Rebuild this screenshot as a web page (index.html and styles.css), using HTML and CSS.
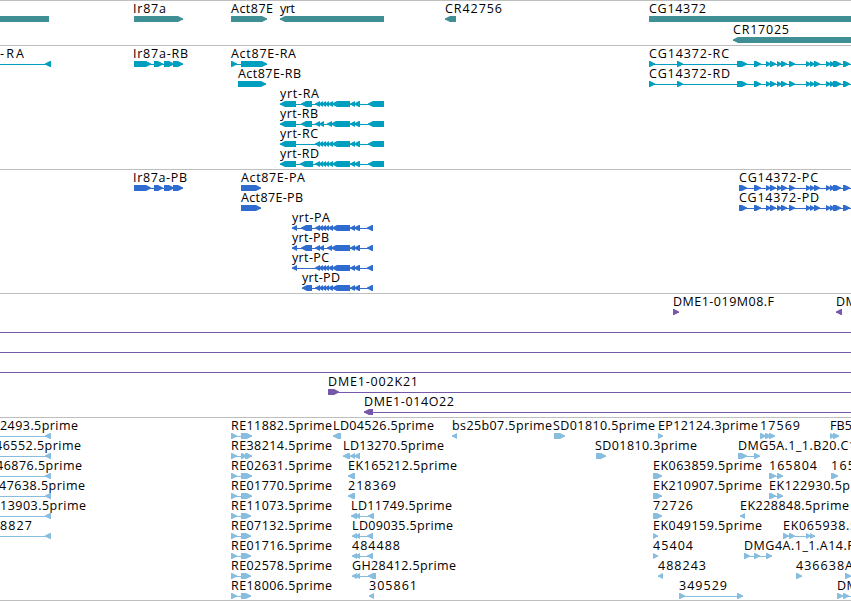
FILE: index.html
```
<!DOCTYPE html>
<html lang="en">
<head>
    <meta charset="UTF-8">
    <title>Genome Browser</title>
    <link rel="stylesheet" href="styles.css">
</head>
<body>
    <div class="browser">
        <svg class="track genes" id="genes"></svg>
        <svg class="track transcripts" id="transcripts"></svg>
        <svg class="track proteins" id="proteins"></svg>
        <svg class="track clones" id="clones"></svg>
        <svg class="track ests" id="ests"></svg>
    </div>
    <script src="tracks.js"></script>
</body>
</html>
```
FILE: styles.css
```
body {
    margin: 0;
    background-color: #fff;
    overflow: hidden;
}
.browser {
    display: flex;
    flex-direction: column;
    width: 851px;
    border-bottom: 1px solid #bebebe;
}
.track {
    display: block;
    width: 100%;
    height: 124px;
    box-sizing: border-box;
    border-top: 1px solid #bebebe;
    overflow: hidden;
}
.genes {
    height: 45px;
    fill: #408f94;
}
.transcripts {
    fill: #009fbf;
}
.proteins {
    fill: #306ccf;
}
.clones {
    fill: #7559a8;
}
.ests {
    height: 183px;
    fill: #87bddf;
}
.label {
    font-family: "Open Sans", "DejaVu Sans", sans-serif;
    font-size: 12.5px;
    fill: #000;
}
```
FILE: tracks.js
```
// feature: [row, strand, label, label x, label width, blocks, line end (optional), line start (optional)]
const yrtTail = [[350, 355], [354, 360]];
const yrtMid = [[315, 320], [319, 323], [322, 326], [325, 329], [328, 333], [332, 350]];
const yrtMidB = [[315, 320], [319, 324], [327, 332], [331, 350]];
const cgExons = [[754, 761], [766, 771], [770, 776], [777, 782], [781, 787], [789, 795],
    [806, 811], [810, 815], [814, 820], [826, 831], [830, 835], [833, 841], [843, 850]];

const tracks = {
    genes: [
        [0, 0, '', 0, 0, [[-5, 49]]],
        [0, 1, 'Ir87a', 133, 33, [[134, 183]]],
        [0, 1, 'Act87E', 231, 42, [[231, 267]]],
        [0, -1, 'yrt', 280, 15, [[280, 384]]],
        [0, -1, 'CR42756', 445, 57, [[445, 456]]],
        [0, 1, 'CG14372', 649, 57, [[649, 870]]],
        [1, -1, 'CR17025', 733, 56, [[733, 870]]]
    ],
    transcripts: [
        [0, -1, '-RA', 0, 24, [[45, 51]], 51, -5],
        [0, 1, 'Ir87a-RB', 133, 55, [[134, 151], [154, 163], [164, 174], [173, 183]]],
        [0, 1, 'Act87E-RA', 231, 65, [[231, 237], [241, 267]]],
        [1, 1, 'Act87E-RB', 238, 63, [[238, 266]]],
        [2, -1, 'yrt-RA', 280, 39, [[280, 296], [301, 312], ...yrtMid, ...yrtTail, [368, 384]]],
        [3, -1, 'yrt-RB', 280, 38, [[280, 296], [301, 312], ...yrtMidB, ...yrtTail, [368, 384]]],
        [4, -1, 'yrt-RC', 280, 38, [[280, 296], ...yrtMid, ...yrtTail, [368, 384]]],
        [5, -1, 'yrt-RD', 280, 39, [[280, 296], [300, 313], ...yrtMid, ...yrtTail, [368, 384]]],
        [0, 1, 'CG14372-RC', 649, 80, [[649, 655], [677, 683], [737, 747], ...cgExons], 860],
        [1, 1, 'CG14372-RD', 649, 81, [[649, 655], [677, 683], [737, 747], ...cgExons], 860]
    ],
    proteins: [
        [0, 1, 'Ir87a-PB', 133, 54, [[134, 151], [154, 163], [164, 174], [173, 183]]],
        [0, 1, 'Act87E-PA', 241, 64, [[241, 261]]],
        [1, 1, 'Act87E-PB', 241, 62, [[241, 261]]],
        [2, -1, 'yrt-PA', 292, 38, [[292, 297], [301, 312], ...yrtMid, ...yrtTail, [367, 373]]],
        [3, -1, 'yrt-PB', 292, 37, [[292, 297], [301, 312], ...yrtMidB, ...yrtTail, [367, 373]]],
        [4, -1, 'yrt-PC', 292, 37, [[292, 297], ...yrtMid, ...yrtTail, [367, 373]]],
        [5, -1, 'yrt-PD', 302, 38, [[302, 312], ...yrtMid, ...yrtTail, [367, 373]]],
        [0, 1, 'CG14372-PC', 739, 79, [[739, 747], ...cgExons], 860],
        [1, 1, 'CG14372-PD', 739, 80, [[739, 747], ...cgExons], 860]
    ],
    clones: [
        [0, 1, 'DME1-019M08.F', 673, 101, [[673, 679]]],
        [0, -1, 'DME1', 836, 36, [[836, 842]]],
        [1, 0, '', 0, 0, [], 860, -5],
        [2, 0, '', 0, 0, [], 860, -5],
        [3, 0, '', 0, 0, [], 860, -5],
        [4, 1, 'DME1-002K21', 328, 90, [[328, 339]], 860],
        [5, -1, 'DME1-014O22', 364, 90, [[364, 373]], 860]
    ],
    ests: [
        [0, -1, '2493.5prime', 0, 78, [[45, 51]], 51, -5],
        [1, -1, '46552.5prime', -5, 86, [[45, 51]], 51, -5],
        [2, -1, '46876.5prime', -4, 86, [[45, 51]], 51, -5],
        [3, -1, '47638.5prime', -1, 86, [[45, 51]], 51, -5],
        [4, -1, '13903.5prime', 0, 86, [[45, 51]], 51, -5],
        [5, -1, '8827', 0, 32, [[45, 51]], 51, -5],
        [0, 1, 'RE11882.5prime', 231, 101, [[231, 237], [241, 252]]],
        [1, 1, 'RE38214.5prime', 231, 101, [[231, 237], [241, 247], [245, 252]]],
        [2, 1, 'RE02631.5prime', 231, 101, [[231, 237], [241, 252]]],
        [3, 1, 'RE01770.5prime', 231, 101, [[231, 237], [241, 252]]],
        [4, 1, 'RE11073.5prime', 231, 101, [[231, 237], [241, 251]]],
        [5, 1, 'RE07132.5prime', 231, 101, [[231, 237], [241, 251]]],
        [6, 1, 'RE01716.5prime', 231, 101, [[231, 237], [241, 251]]],
        [7, 1, 'RE02578.5prime', 231, 101, [[231, 237], [241, 251]]],
        [8, 1, 'RE18006.5prime', 231, 101, [[231, 237], [241, 251]]],
        [0, -1, 'LD04526.5prime', 333, 101, [[333, 341]]],
        [1, -1, 'LD13270.5prime', 343, 101, [[343, 350], [350, 355], [354, 360]]],
        [2, -1, 'EK165212.5prime', 348, 109, [[348, 355]]],
        [3, -1, '218369', 348, 48, [[348, 355]]],
        [4, -1, 'LD11749.5prime', 351, 101, [[351, 357], [355, 360], [368, 374]]],
        [5, -1, 'LD09035.5prime', 352, 101, [[352, 357], [355, 360], [367, 373]]],
        [6, -1, '484488', 352, 48, [[352, 357], [355, 360], [367, 373]]],
        [7, -1, 'GH28412.5prime', 352, 104, [[352, 357], [355, 360], [368, 376]]],
        [8, -1, '305861', 369, 48, [[369, 374]]],
        [0, -1, 'bs25b07.5prime', 452, 100, [[452, 457]]],
        [0, 1, 'SD01810.5prime', 553, 102, [[554, 565]]],
        [1, 1, 'SD01810.3prime', 595, 102, [[596, 606]]],
        [0, 1, 'EP12124.3prime', 658, 100, [[658, 663]]],
        [2, 1, 'EK063859.5prime', 653, 109, [[653, 662]]],
        [3, 1, 'EK210907.5prime', 653, 109, [[653, 662]]],
        [4, 1, '72726', 653, 40, [[653, 662]]],
        [5, 1, 'EK049159.5prime', 653, 109, [[653, 658]]],
        [6, 1, '45404', 653, 40, [[653, 658]]],
        [7, -1, '488243', 658, 48, [[658, 663]]],
        [8, 1, '349529', 679, 48, [[679, 685], [737, 743]]],
        [0, 1, '17569', 760, 40, [[760, 766], [765, 771], [769, 775]]],
        [0, 1, 'FB5', 830, 22, [[830, 835], [833, 839]]],
        [1, 1, 'DMG5A.1_1.B20.C1', 738, 118, [[738, 747], [754, 760]]],
        [2, 1, '165804', 769, 48, [[769, 776], [777, 783]]],
        [2, 1, '165', 831, 24, [[831, 838]]],
        [3, 1, 'EK122930.5prime', 769, 110, [[769, 776], [777, 783]]],
        [4, -1, 'EK228848.5prime', 740, 109, [[740, 745]]],
        [5, 1, 'EK065938.5prime', 783, 112, [[783, 789], [789, 795], [806, 811], [810, 815]]],
        [6, 1, 'DMG4A.1_1.A14.R', 744, 111, [[744, 750], [754, 760], [766, 772]]],
        [7, 1, '436638A', 796, 57, [[796, 802]]],
        [7, 1, '', 0, 0, [[845, 851]], 860],
        [8, 1, 'DME1', 837, 36, [[837, 843], [843, 849]], 860]
    ]
};

const svgNS = 'http://www.w3.org/2000/svg';

function add(parent, name, attrs) {
    const el = document.createElementNS(svgNS, name);
    for (const key in attrs) {
        el.setAttribute(key, attrs[key]);
    }
    parent.appendChild(el);
    return el;
}

// block with a pointed end in the direction of the strand
function blockPoints(start, end, y, strand) {
    const head = Math.min(5, end - start);
    if (strand > 0) {
        return `${start},${y} ${end - head},${y} ${end},${y + 2.5} ${end},${y + 3.5} ${end - head},${y + 6} ${start},${y + 6}`;
    }
    if (strand < 0) {
        return `${end},${y} ${start + head},${y} ${start},${y + 2.5} ${start},${y + 3.5} ${start + head},${y + 6} ${end},${y + 6}`;
    }
    return `${start},${y} ${end},${y} ${end},${y + 6} ${start},${y + 6}`;
}

for (const id in tracks) {
    const svg = document.getElementById(id);
    const pitch = id === 'genes' ? 21 : 20;

    for (const [row, strand, text, x, width, blocks, to, from] of tracks[id]) {
        const y = 15 + row * pitch;
        const start = from !== undefined ? from : blocks[0][0];
        const end = to !== undefined ? to : blocks[blocks.length - 1][1];

        add(svg, 'rect', { x: start, y: y + 3, width: end - start, height: 1 });
        for (const [s, e] of blocks) {
            add(svg, 'polygon', { points: blockPoints(s, e, y, strand) });
        }
        if (text) {
            add(svg, 'text', { class: 'label', x: x, y: y - 3, textLength: width }).textContent = text;
        }
    }
}
```
